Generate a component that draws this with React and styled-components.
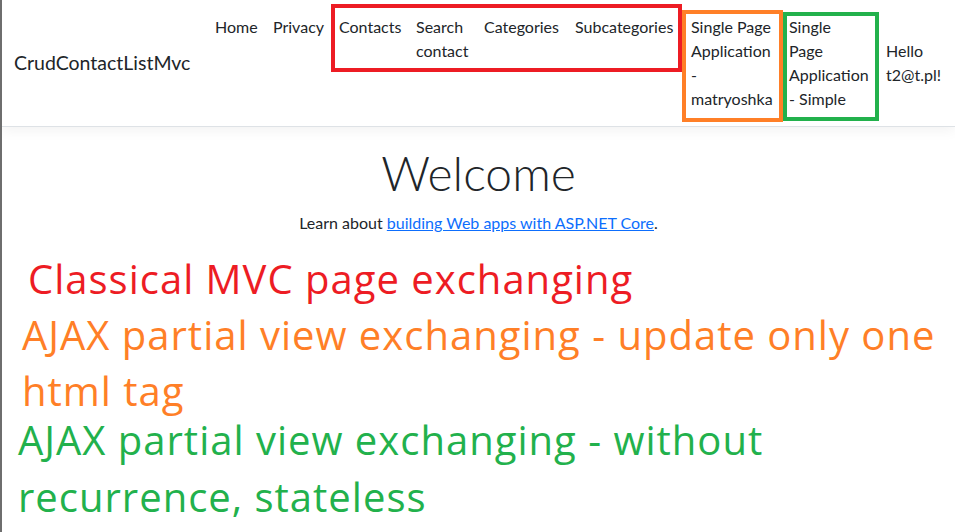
import React from 'react'
import styled, { createGlobalStyle } from 'styled-components'

const GlobalStyle = createGlobalStyle`
    html, body {
        margin: 0;
        padding: 0;
        background: #fff;
    }

    body {
        font-family: Lato, "Open Sans", sans-serif;
        font-size: 16px;
        line-height: 1.5;
        color: #212529;
    }

    * {
        box-sizing: border-box;
    }
`;

const StyledPage = styled.div`
    min-height: 100vh;
    border-left: 2px solid #6e6e6e;
    overflow: hidden;
`;

const StyledNavbar = styled.header`
    display: flex;
    align-items: center;
    height: 127px;
    padding: 7px 12px 8px;
    background: #fff;
    border-bottom: 1px solid #dee2e6;
    box-shadow: 0 4px 12px rgba(0, 0, 0, 0.05);
    margin-bottom: 16px;
`;

const StyledBrand = styled.a`
    flex: 0 0 auto;
    width: 176px;
    margin-right: 17px;
    font-size: 19.5px;
    line-height: 30px;
    color: #212529;
    text-decoration: none;
    white-space: nowrap;
`;

const StyledNav = styled.nav`
    display: flex;
    align-items: flex-start;
    align-self: flex-start;
`;

const StyledGroup = styled.div`
    position: relative;
    display: flex;
    align-items: flex-start;

    &::after {
        content: '';
        position: absolute;
        top: ${props => props.$top}px;
        right: ${props => props.$right}px;
        bottom: ${props => props.$bottom}px;
        left: ${props => props.$left}px;
        border: 4px solid ${props => props.$color};
        pointer-events: none;
    }
`;

const StyledNavLink = styled.a`
    display: block;
    flex: 0 0 auto;
    box-sizing: content-box;
    width: ${props => props.$w}px;
    padding: 8px;
    font-size: 16px;
    line-height: 24px;
    color: #212529;
    text-decoration: none;
    white-space: nowrap;
`;

const StyledMain = styled.main`
    text-align: center;
    padding: 0 12px;
`;

const StyledTitle = styled.h1`
    margin: 0 0 8px;
    font-size: 48px;
    font-weight: 300;
    line-height: 60px;
`;

const StyledLead = styled.p`
    margin: 0 0 16px;
    font-size: 16px;
    line-height: 24px;

    a {
        color: #0d6efd;
        text-decoration: underline;
    }
`;

const StyledNotes = styled.section`
    display: flex;
    flex-direction: column;
`;

const StyledNote = styled.div`
    margin-left: ${props => props.$left}px;
    margin-top: ${props => props.$top || 0}px;
    font-family: "Open Sans", Lato, sans-serif;
    font-size: 40px;
    letter-spacing: 1px;
    line-height: ${props => props.$lh || 56}px;
    color: ${props => props.$color};
    white-space: nowrap;
`;

const lines = (text) => text.split('\n').map((line, i) => (
    <React.Fragment key={i}>
        {i > 0 && <br />}
        {line}
    </React.Fragment>
));

const links = {
    plain: [
        { label: 'Home', w: 42 },
        { label: 'Privacy', w: 50 },
    ],
    classic: [
        { label: 'Contacts', w: 61 },
        { label: 'Search\ncontact', w: 52 },
        { label: 'Categories', w: 75 },
        { label: 'Subcategories', w: 100 },
    ],
};

const App = () => {
    return (
        <StyledPage>
            <GlobalStyle />
            <StyledNavbar>
                <StyledBrand href="#">CrudContactListMvc</StyledBrand>
                <StyledNav>
                    {links.plain.map(link => (
                        <StyledNavLink key={link.label} href="#" $w={link.w}>
                            {lines(link.label)}
                        </StyledNavLink>
                    ))}
                    <StyledGroup $color="#ed1c24" $top={-3} $right={1} $bottom={-1} $left={0}>
                        {links.classic.map(link => (
                            <StyledNavLink key={link.label} href="#" $w={link.w}>
                                {lines(link.label)}
                            </StyledNavLink>
                        ))}
                    </StyledGroup>
                    <StyledGroup $color="#ff7f27" $top={3} $right={-2} $bottom={-3} $left={-1}>
                        <StyledNavLink href="#" $w={82}>
                            {lines('Single Page\nApplication\n-\nmatryoshka')}
                        </StyledNavLink>
                    </StyledGroup>
                    <StyledGroup $color="#22b14c" $top={5} $right={-1} $bottom={-2} $left={2}>
                        <StyledNavLink href="#" $w={81}>
                            {lines('Single\nPage\nApplication\n- Simple')}
                        </StyledNavLink>
                    </StyledGroup>
                    <StyledNavLink href="#" $w={56}>
                        <br />
                        {lines('Hello\nt2@t.pl!')}
                    </StyledNavLink>
                </StyledNav>
            </StyledNavbar>
            <StyledMain>
                <StyledTitle>Welcome</StyledTitle>
                <StyledLead>
                    Learn about <a href="#">building Web apps with ASP.NET Core</a>.
                </StyledLead>
            </StyledMain>
            <StyledNotes>
                <StyledNote $color="#ed1c24" $left={26}>
                    Classical MVC page exchanging
                </StyledNote>
                <StyledNote $color="#ff7f27" $left={20}>
                    {lines('AJAX partial view exchanging - update only one\nhtml tag')}
                </StyledNote>
                <StyledNote $color="#22b14c" $left={16} $top={-8} $lh={57}>
                    {lines('AJAX partial view exchanging - without\nrecurrence, stateless')}
                </StyledNote>
            </StyledNotes>
        </StyledPage>
    )
};

export default App;
